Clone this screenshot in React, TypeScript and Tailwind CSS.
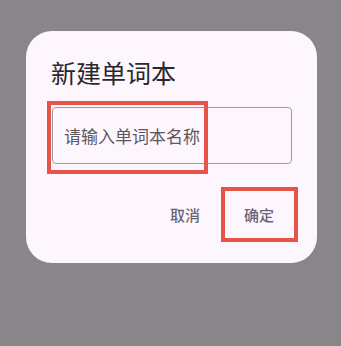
import React from "react";

const App: React.FC = () => {
  return (
    <div
      className="w-[341px] h-[346px] overflow-hidden bg-[#8a8589] pt-[31px] pl-[26px]"
      style={{ fontFamily: '"Noto Sans CJK SC", "Noto Sans", sans-serif' }}
    >
      {/* Dialog card */}
      <div className="relative w-[291px] h-[232px] rounded-[26px] bg-[#fdf7fd] px-[25px] pt-[25px]">
        <h2 className="text-[25px] leading-[33px] text-[#2a272d]">新建单词本</h2>

        <div className="mt-[18px] ml-[1px] flex h-[57px] w-[240px] items-center rounded-[4px] border border-[#9f99a2] pl-[11px]">
          <span className="text-[17px] leading-[24px] text-[#5b5661]">请输入单词本名称</span>
        </div>

        <div className="mt-[31px] flex items-center justify-end gap-[20px] pr-[6px]">
          <button className="h-[40px] px-[12px] text-[15px] leading-[20px] font-medium text-[#6b6479]">取消</button>
          <button className="h-[40px] px-[12px] text-[15px] leading-[20px] font-medium text-[#6b6479]">确定</button>
        </div>

        {/* Highlight boxes */}
        <div className="absolute left-[21px] top-[70px] h-[73px] w-[161px] border-4 border-[#e5534b]"></div>
        <div className="absolute left-[195px] top-[156px] h-[55px] w-[77px] border-4 border-[#e5534b]"></div>
      </div>
    </div>
  );
};

export default App;
